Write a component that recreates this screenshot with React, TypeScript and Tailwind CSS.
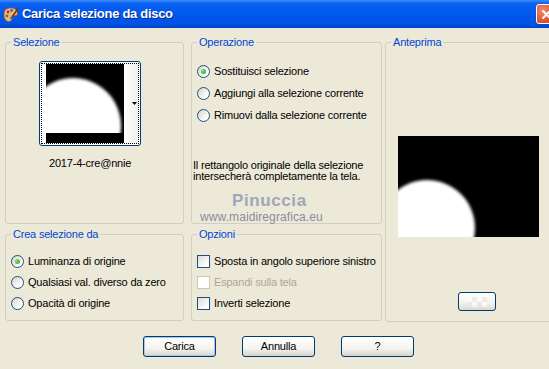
import React from "react";

const blue = "text-[#0046d5]";

function TitleIcon() {
  return (
    <svg width="18" height="18" viewBox="0 0 18 18">
      <path d="M3 4 C6 1 13 1 15 5 C17 9 14 10 12 10 C10 10 11 13 9 15 C6 17 2 14 2 10 C2 7 2 5 3 4 Z" fill="#f2b47a" stroke="#8a4a20" strokeWidth="0.8" />
      <circle cx="6" cy="6" r="1.4" fill="#e02020" />
      <circle cx="9.5" cy="4.5" r="1.3" fill="#2050e0" />
      <circle cx="5" cy="10" r="1.4" fill="#20a030" />
      <circle cx="12.5" cy="6.5" r="1.1" fill="#f0e020" />
      <path d="M16.5 2 L10 11" stroke="#6b3a10" strokeWidth="1.6" />
      <path d="M10 11 L8.5 13" stroke="#2a60d0" strokeWidth="2" />
    </svg>
  );
}

function Radio({ checked, label }: { checked?: boolean; label: string }) {
  return (
    <div className="flex items-center h-[13px] leading-[13px]">
      <span className="w-[13px] h-[13px] rounded-full border border-[#1c5180] bg-[linear-gradient(135deg,#d6d3c8,#ffffff_75%)] flex items-center justify-center">
        {checked && (
          <span className="w-[5px] h-[5px] rounded-full bg-[radial-gradient(circle_at_35%_35%,#7fe07f,#21a121)]" />
        )}
      </span>
      <span className="ml-[4px] tracking-[-0.2px]">{label}</span>
    </div>
  );
}

function Check({ disabled, label }: { disabled?: boolean; label: string }) {
  return (
    <div className="flex items-center h-[13px] leading-[13px]">
      <span
        className={
          disabled
            ? "w-[13px] h-[13px] border border-[#cac8bb] bg-white"
            : "w-[13px] h-[13px] border border-[#1c5180] bg-[linear-gradient(135deg,#dcdcd7,#ffffff_80%)]"
        }
      />
      <span className={disabled ? "ml-[4px] tracking-[-0.2px] text-[#aca899]" : "ml-[4px] tracking-[-0.2px]"}>
        {label}
      </span>
    </div>
  );
}

function Group({ title, className, children }: { title: string; className: string; children?: React.ReactNode }) {
  return (
    <fieldset className={`border border-[#d0d0bf] rounded-[3px] ${className}`}>
      <legend className={`ml-[5px] px-[2px] leading-[13px] tracking-[-0.2px] ${blue}`}>{title}</legend>
      {children}
    </fieldset>
  );
}

function XpButton({ label, isDefault }: { label: string; isDefault?: boolean }) {
  return (
    <button
      className={`h-[21px] w-[73px] rounded-[3px] border border-[#003c74] bg-[linear-gradient(to_bottom,#ffffff,#f5f4ef_60%,#d8d3c8)] text-[11px] tracking-[-0.2px] text-black ${
        isDefault ? "shadow-[inset_0_0_0_1px_#a9c4f5]" : ""
      }`}
    >
      {label}
    </button>
  );
}

function Thumb() {
  return (
    <svg width="78" height="79" viewBox="0 0 78 79">
      <defs>
        <filter id="bt" x="-20%" y="-20%" width="140%" height="140%">
          <feGaussianBlur stdDeviation="1.6" />
        </filter>
        <clipPath id="ct">
          <rect x="0" y="0" width="78" height="69" />
        </clipPath>
      </defs>
      <rect width="78" height="79" fill="#000" />
      <g clipPath="url(#ct)">
        <circle cx="27" cy="62" r="48" fill="#fff" filter="url(#bt)" />
      </g>
    </svg>
  );
}

function Preview() {
  return (
    <svg width="141" height="101" viewBox="0 0 141 101">
      <defs>
        <filter id="bp" x="-20%" y="-20%" width="140%" height="140%">
          <feGaussianBlur stdDeviation="1.8" />
        </filter>
        <clipPath id="cp">
          <rect width="141" height="101" />
        </clipPath>
      </defs>
      <rect width="141" height="101" fill="#000" />
      <g clipPath="url(#cp)">
        <circle cx="29" cy="92" r="48" fill="#fff" filter="url(#bp)" />
      </g>
    </svg>
  );
}

export default function App() {
  return (
    <div className="w-[549px] h-[369px] overflow-hidden bg-[#ece9d8] font-['Liberation_Sans',Arial,sans-serif] text-[11px] text-black">
      {/* Title bar */}
      <div className="h-[28px] flex items-center overflow-hidden bg-[linear-gradient(to_bottom,#3d8df7_0%,#0a62f2_12%,#0058ee_45%,#0054e6_85%,#0040c4_100%)]">
        <div className="ml-[2px] mt-[1px]">
          <TitleIcon />
        </div>
        <span className="ml-[2px] text-[13px] font-bold tracking-[-0.3px] text-white [text-shadow:1px_1px_0_#0a2a8a]">
          Carica selezione da disco
        </span>
        <div className="ml-auto mr-[-8px] w-[21px] h-[20px] shrink-0 rounded-[3px] border border-white bg-[radial-gradient(circle_at_30%_30%,#f08a68,#e0532c_60%,#c8401c)] flex items-center justify-center">
          <svg width="11" height="11" viewBox="0 0 11 11">
            <path d="M1.5 1.5 L9.5 9.5 M9.5 1.5 L1.5 9.5" stroke="#fff" strokeWidth="2" />
          </svg>
        </div>
      </div>

      {/* Groups */}
      <div className="flex pl-[5px] pt-[8px]">
        <div className="w-[179px] shrink-0 flex flex-col">
          <Group title="Selezione" className="h-[188px]">
            <div className="ml-[33px] mt-[12px] w-[102px] h-[85px] rounded-[3px] border border-[#003c74] bg-white p-[1px]">
              <div className="h-full border border-dotted border-black flex">
                <div className="ml-[4px]">
                  <Thumb />
                </div>
                <div className="flex-1 flex items-center justify-end pr-[1px] bg-[linear-gradient(to_right,#ffffff,#f0efea)]">
                  <svg width="5" height="3" viewBox="0 0 5 3">
                    <path d="M0 0 H5 L2.5 3 Z" fill="#000" />
                  </svg>
                </div>
              </div>
            </div>
            <div className="mt-[11px] ml-[43px] leading-[13px] tracking-[-0.2px]">2017-4-cre@nnie</div>
          </Group>
          <Group title="Crea selezione da" className="mt-[4px] h-[93px]">
            <div className="ml-[5px] mt-[14px] flex flex-col gap-[8px]">
              <Radio checked label="Luminanza di origine" />
              <Radio label="Qualsiasi val. diverso da zero" />
              <Radio label="Opacità di origine" />
            </div>
          </Group>
        </div>

        <div className="ml-[7px] w-[191px] shrink-0 flex flex-col">
          <Group title="Operazione" className="h-[188px]">
            <div className="ml-[5px] mt-[16px] flex flex-col gap-[9px]">
              <Radio checked label="Sostituisci selezione" />
              <Radio label="Aggiungi alla selezione corrente" />
              <Radio label="Rimuovi dalla selezione corrente" />
            </div>
            <p className="ml-[1px] mt-[38px] leading-[11px] tracking-[-0.2px]">
              Il rettangolo originale della selezione
              <br />
              intersecherà completamente la tela.
            </p>
            <div className="ml-[40px] mt-[10px] text-[17px] leading-[18px] font-bold tracking-[0.6px] text-[#a0a6bc]">
              Pinuccia
            </div>
            <div className="ml-[8px] text-[12px] leading-[14px] tracking-[0.1px] text-[#888d9f]">
              www.maidiregrafica.eu
            </div>
          </Group>
          <Group title="Opzioni" className="mt-[4px] h-[93px]">
            <div className="ml-[5px] mt-[14px] flex flex-col gap-[8px]">
              <Check label="Sposta in angolo superiore sinistro" />
              <Check disabled label="Espandi sulla tela" />
              <Check label="Inverti selezione" />
            </div>
          </Group>
        </div>

        <div className="ml-[3px] w-[167px] shrink-0">
          <Group title="Anteprima" className="h-[286px]">
            <div className="mt-[87px] flex justify-center">
              <Preview />
            </div>
            <div className="ml-[72px] mt-[55px] w-[38px] h-[19px] rounded-[3px] border border-[#003c74] bg-[linear-gradient(to_bottom,#ffffff,#f3f2ed_60%,#dcd7cc)] flex items-center justify-center">
              <div className="w-[20px] h-[10px] opacity-60 bg-[conic-gradient(#e4e4e4_25%,#ffffff_0_50%,#e4e4e4_0_75%,#ffffff_0)] bg-[length:10px_10px]" />
            </div>
          </Group>
        </div>
      </div>

      {/* Buttons */}
      <div className="flex pl-[143px] mt-[14px]">
        <XpButton label="Carica" isDefault />
        <div className="ml-[26px]">
          <XpButton label="Annulla" />
        </div>
        <div className="ml-[26px]">
          <XpButton label="?" />
        </div>
      </div>
    </div>
  );
}
